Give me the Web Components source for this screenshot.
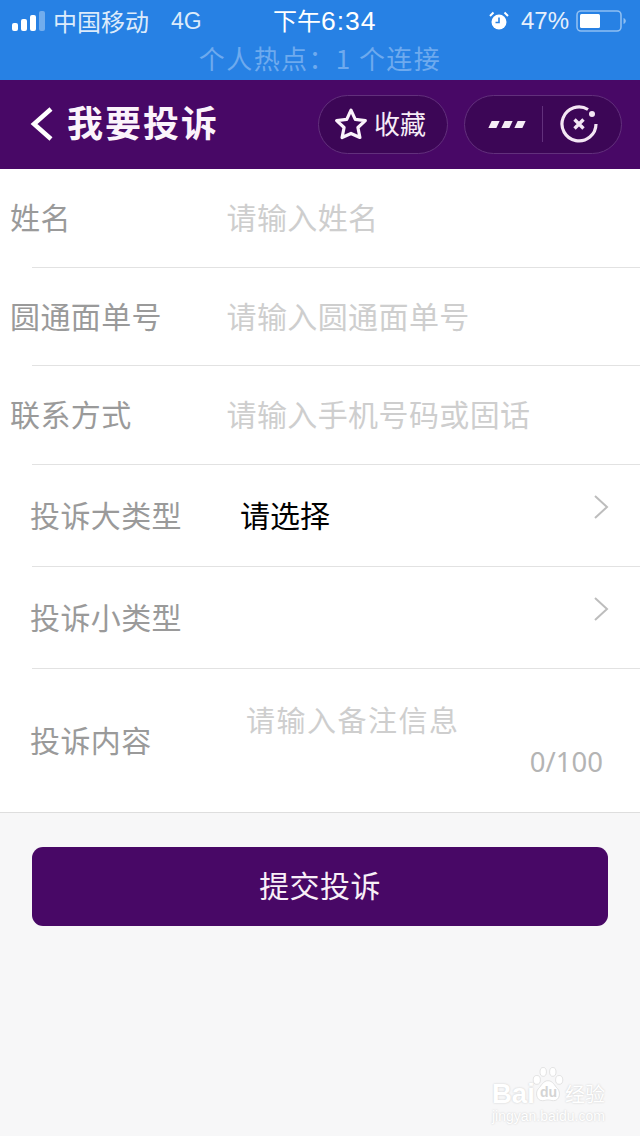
<!DOCTYPE html>
<html lang="zh">
<head>
<meta charset="utf-8">
<title>我要投诉</title>
<style>
  html, body { margin: 0; padding: 0; }
  body {
    width: 640px;
    height: 1136px;
    overflow: hidden;
    background: #f7f7f8;
    font-family: "Noto Sans CJK SC", "Liberation Sans", sans-serif;
    position: relative;
  }
</style>
</head>
<body>
<template id="status-tpl">
  <style>
    :host { display: block; height: 80px; background: #2781e4; color: #fff; }
    .top { display: flex; align-items: center; height: 42px; padding: 0 14px 0 12px; position: relative; font-family: "Liberation Sans", "Noto Sans CJK SC", sans-serif; }
    .sig { display: flex; align-items: flex-end; gap: 3px; width: 34px; height: 20px; }
    .sig i { display: block; background: #fff; border-radius: 2px; width: 6px; flex: none; }
    .sig i:last-child { background: rgba(255,255,255,.35); }
    .carrier { font-family: "Noto Sans CJK SC", sans-serif; font-size: 24px; margin-left: 7px; color: #dcebfb; line-height: 1; }
    .net { font-size: 23px; margin-left: 22px; color: #dcebfb; }
    .time { position: absolute; left: 273px; font-size: 24px; line-height: 1; font-family: "Noto Sans CJK SC", sans-serif; white-space: nowrap; }
    .time b { font-family: "Liberation Sans", sans-serif; font-size: 26.500px; font-weight: 400; letter-spacing: 1px; }
    .right { margin-left: auto; display: flex; align-items: center; }
    .pct { font-size: 24px; margin: 0 7px 0 12px; color: #e6f0fc; }
    .hot { text-align: center; font-size: 26px; line-height: 32px; color: #6eaaee; letter-spacing: 1.400px; }
  </style>
  <div class="top">
    <div class="sig"><i style="height:8px"></i><i style="height:12px"></i><i style="height:16px"></i><i style="height:20px"></i></div>
    <span class="carrier">中国移动</span>
    <span class="net">4G</span>
    <span class="time">下午<b>6:34</b></span>
    <div class="right">
      <svg width="20" height="20" viewBox="0 0 20 20"><circle cx="10" cy="11" r="7.500" fill="#fff"/><path d="M10 6.500V11.500H6.500" fill="none" stroke="#2781e4" stroke-width="1.600"/><path d="M1 5 4.500 1.500M19 5 15.500 1.500" stroke="#fff" stroke-width="2"/></svg>
      <span class="pct">47%</span>
      <svg width="50" height="24" viewBox="0 0 50 24"><rect x="1" y="2" width="44" height="20" rx="4" fill="none" stroke="#8fbff2" stroke-width="1.600"/><rect x="4" y="5" width="20" height="14" rx="1.500" fill="#fff"/><path d="M47.500 9v6c1.500-.5 2.300-1.600 2.300-3s-.8-2.500-2.300-3z" fill="#8fbff2"/></svg>
    </div>
  </div>
  <div class="hot">个人热点：1 个连接</div>
</template>

<template id="nav-tpl">
  <style>
    :host { display: flex; align-items: center; height: 89px; background: #480866; color: #fff; box-sizing: border-box; padding: 0 18px 0 30px; }
    .back { display: block; margin: 0 14px 2px 0; }
    h1 { margin: 0 0 7px -1px; font-size: 36px; font-weight: 700; letter-spacing: 2px; line-height: 1; flex: 1; color: #fbf3fb; }
    .pill { display: flex; align-items: center; height: 59px; box-sizing: border-box; border: 1px solid #62307c; border-radius: 30px; background: #3c0656; margin-bottom: 1px; }
    .fav { width: 130px; padding-left: 15px; gap: 6px; font-size: 26px; margin-right: 16px; color: #f6ecf6; }
    .fav span { margin-bottom: 4px; }
    .more { width: 158px; }
    .dots { width: 77px; display: flex; justify-content: center; gap: 5px; padding-left: 6px; box-sizing: border-box; }
    .dots i { display: block; width: 8px; height: 7px; background: #f6ecf6; transform: skewX(-25deg); }
    .sep { width: 1px; height: 36px; background: #62307c; }
    .close { flex: 1; display: flex; justify-content: center; padding-right: 7px; }
  </style>
  <svg class="back" width="24" height="36" viewBox="0 0 24 36"><path d="M21 3 4 18l17 15" fill="none" stroke="#fff" stroke-width="4.500"/></svg>
  <h1><slot></slot></h1>
  <div class="pill fav">
    <svg width="34" height="34" viewBox="0 0 32 32"><path d="M16 3l4 8.600 9.500 1.200-7 6.500 1.900 9.400L16 24.900l-8.400 3.800 1.900-9.400-7-6.500 9.500-1.200z" fill="none" stroke="#fbf3fb" stroke-width="3" stroke-linejoin="round"/></svg>
    <span>收藏</span>
  </div>
  <div class="pill more">
    <div class="dots"><i></i><i></i><i></i></div>
    <div class="sep"></div>
    <div class="close">
      <svg width="38" height="38" viewBox="0 0 38 38"><path d="M28 4.500A17 17 0 1 0 36 19" fill="none" stroke="#f4e6f4" stroke-width="3.200"/><circle cx="32" cy="9" r="3" fill="#f4e6f4"/><path d="M14.500 14.500l9 9m0-9-9 9" stroke="#f4e6f4" stroke-width="3.400"/></svg>
    </div>
  </div>
</template>

<template id="row-tpl">
  <style>
    :host { display: flex; align-items: center; box-sizing: border-box; position: relative; height: var(--h, 99px); padding-bottom: 5px; font-size: 30px; color: #9a9a9a; padding-left: var(--pl, 10px); letter-spacing: .4px; }
    :host(:not(:last-child))::after { content: ""; position: absolute; left: 32px; right: 0; bottom: 0; height: 1px; background: #e2e2e2; }
    .label { width: var(--lw, 216.500px); flex: none; }
    .val { flex: 1; font-size: 30px; color: #cecece; }
    :host([picker]) .val { color: #000; padding-left: 10px; letter-spacing: 0; }
    .chev { position: absolute; right: 31px; top: 29px; display: none; }
    :host([picker]) .chev { display: block; }
  </style>
  <span class="label"></span>
  <span class="val"><slot></slot></span>
  <svg class="chev" width="16" height="26" viewBox="0 0 16 26"><path d="M2 2l12 11L2 24" fill="none" stroke="#bdbdbd" stroke-width="2"/></svg>
</template>

<template id="memo-tpl">
  <style>
    :host { display: flex; box-sizing: border-box; height: 144px; padding-left: 30px; position: relative; border-bottom: 1px solid #dedede; }
    .label { width: 216px; font-size: 30px; color: #9a9a9a; padding-top: 48px; line-height: 44px; letter-spacing: .4px; }
    .ph { font-size: 29px; color: #cecece; padding-top: 28px; line-height: 44px; letter-spacing: 1.500px; }
    .count { position: absolute; right: 37px; top: 75px; font-size: 27.500px; line-height: 36px; color: #b4b4b4; font-family: "Noto Sans", "Liberation Sans", sans-serif; }
  </style>
  <span class="label">投诉内容</span>
  <span class="ph">请输入备注信息</span>
  <span class="count">0/100</span>
</template>

<template id="form-tpl">
  <style>
    :host { display: block; background: #fff; }
  </style>
  <slot></slot>
</template>

<template id="btn-tpl">
  <style>
    :host { display: flex; align-items: center; justify-content: center; box-sizing: border-box; height: 79px; padding-bottom: 5px; margin: 34px 32px 0; border-radius: 11px; background: #480866; color: #f8f0f8; font-size: 30px; letter-spacing: .4px; }
  </style>
  <slot></slot>
</template>

<template id="mark-tpl">
  <style>
    :host { position: absolute; left: 490px; top: 1066px; width: 130px; height: 64px; color: #fff; font-family: "Liberation Sans", sans-serif; text-shadow: 0 0 2px #c8c8c8; }
    .paw { position: absolute; left: 42px; top: 1px; }
    .brand { position: absolute; left: 2px; top: 13px; font-size: 27.500px; line-height: 30px; font-weight: 700; white-space: nowrap; }
    .du { position: absolute; left: 50px; top: 18px; font-size: 14px; line-height: 16px; font-weight: 700; color: #d4d4d4; text-shadow: none; }
    .cn { position: absolute; left: 75px; top: 18px; font-size: 20px; line-height: 20px; font-family: "Noto Sans CJK SC", sans-serif; white-space: nowrap; }
    .url { position: absolute; left: 2px; top: 41px; font-size: 14px; line-height: 18px; white-space: nowrap; }
  </style>
  <svg class="paw" width="32" height="37" viewBox="0 0 40 46" fill="#fff" stroke="#d4d4d4" stroke-width=".8"><ellipse cx="6" cy="16" rx="4.500" ry="5.500"/><ellipse cx="14" cy="6" rx="4" ry="5.500"/><ellipse cx="26" cy="6" rx="4" ry="5.500"/><ellipse cx="34" cy="16" rx="4.500" ry="5.500"/><path d="M20 17c6 0 8 6 12 10s3 15-5 15c-3 0-5-1-7-1s-4 1-7 1c-8 0-9-11-5-15s6-10 12-10z"/></svg>
  <span class="brand">Bai</span>
  <span class="du">du</span>
  <span class="cn">经验</span>
  <span class="url">jingyan.baidu.com</span>
</template>

<status-bar></status-bar>
<nav-bar>我要投诉</nav-bar>
<form-list>
  <form-row label="姓名" style="--h:99px">请输入姓名</form-row>
  <form-row label="圆通面单号" style="--h:98px">请输入圆通面单号</form-row>
  <form-row label="联系方式" style="--h:99px">请输入手机号码或固话</form-row>
  <form-row label="投诉大类型" picker style="--h:102px;--pl:30px;--lw:200px">请选择</form-row>
  <form-row label="投诉小类型" picker style="--h:102px;--pl:30px;--lw:200px"></form-row>
  <memo-row></memo-row>
</form-list>
<submit-button>提交投诉</submit-button>
<baidu-mark></baidu-mark>

<script>
// stamp out an element class whose shadow root is just a clone of its template
function simple(tag, tplId) {
  customElements.define(tag, class extends HTMLElement {
    constructor() {
      super();
      this.attachShadow({ mode: "open" });
      this.shadowRoot.appendChild(document.getElementById(tplId).content.cloneNode(true));
    }
  });
}

simple("status-bar", "status-tpl");
simple("nav-bar", "nav-tpl");
simple("form-list", "form-tpl");
simple("memo-row", "memo-tpl");
simple("submit-button", "btn-tpl");
simple("baidu-mark", "mark-tpl");

class FormRow extends HTMLElement {
  constructor() {
    super();
    this.attachShadow({ mode: "open" });
    this.shadowRoot.appendChild(document.getElementById("row-tpl").content.cloneNode(true));
  }

  connectedCallback() {
    this.shadowRoot.querySelector(".label").textContent = this.getAttribute("label");
  }
}
customElements.define("form-row", FormRow);
</script>
</body>
</html>
